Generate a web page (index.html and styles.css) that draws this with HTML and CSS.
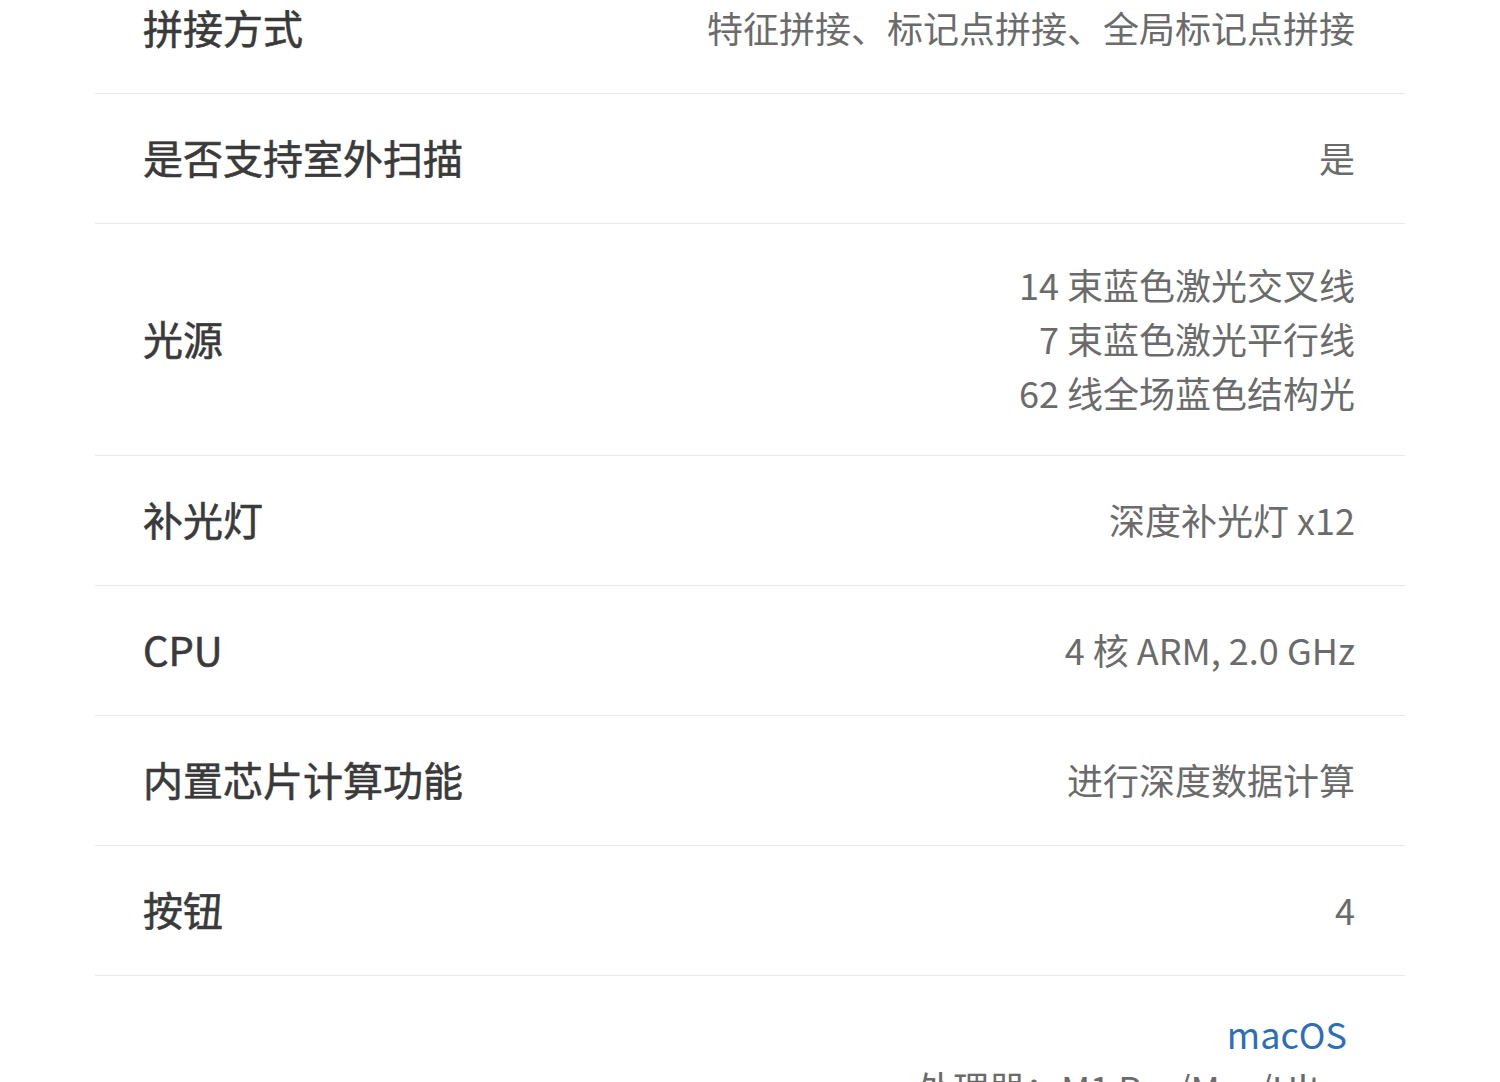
FILE: index.html
```html
<!DOCTYPE html>
<html lang="zh-CN">
<head>
    <meta charset="UTF-8">
    <meta name="viewport" content="width=device-width, initial-scale=1.0">
    <title>产品参数</title>
    <link rel="stylesheet" href="styles.css">
</head>
<body>
    <div class="spec-table">
        <div class="spec-row">
            <div class="spec-label">拼接方式</div>
            <div class="spec-value">特征拼接、标记点拼接、全局标记点拼接</div>
        </div>
        <div class="spec-row">
            <div class="spec-label">是否支持室外扫描</div>
            <div class="spec-value">是</div>
        </div>
        <div class="spec-row">
            <div class="spec-label">光源</div>
            <div class="spec-value">
                <p>14 束蓝色激光交叉线</p>
                <p>7 束蓝色激光平行线</p>
                <p>62 线全场蓝色结构光</p>
            </div>
        </div>
        <div class="spec-row">
            <div class="spec-label">补光灯</div>
            <div class="spec-value">深度补光灯 x12</div>
        </div>
        <div class="spec-row">
            <div class="spec-label">CPU</div>
            <div class="spec-value">4 核 ARM, 2.0 GHz</div>
        </div>
        <div class="spec-row">
            <div class="spec-label">内置芯片计算功能</div>
            <div class="spec-value">进行深度数据计算</div>
        </div>
        <div class="spec-row">
            <div class="spec-label">按钮</div>
            <div class="spec-value">4</div>
        </div>
        <div class="spec-row">
            <div class="spec-label">系统要求</div>
            <div class="spec-value">
                <p class="os-name">macOS</p>
                <p>处理器：M1 Pro/Max/Ultra</p>
                <p>内存：16 GB 及以上</p>
                <p class="os-name">Windows</p>
                <p>Windows 10/11 64 位</p>
            </div>
        </div>
    </div>
</body>
</html>
```

FILE: styles.css
```css
body {
    margin: 0;
    background: #fff;
    font-family: "Noto Sans CJK SC", "Noto Sans", sans-serif;
    overflow: hidden;
}

.spec-table {
    margin: -36px 95px 0;
}

.spec-row {
    display: flex;
    justify-content: space-between;
    align-items: center;
    padding: 33px 50px 36px 48px;
    border-bottom: 1px solid #e9e9e9;
}

.spec-label {
    font-size: 40px;
    line-height: 60px;
    font-weight: 400;
    color: #3a3a3a;
    -webkit-text-stroke: 0.6px #3a3a3a;
}

.spec-value {
    font-size: 36px;
    line-height: 54px;
    color: #6b6b6b;
    text-align: right;
}

.spec-value p {
    margin: 0;
}

.os-name {
    color: #2d6fb7;
    padding-right: 8px;
    margin-top: -3px !important;
}
```
